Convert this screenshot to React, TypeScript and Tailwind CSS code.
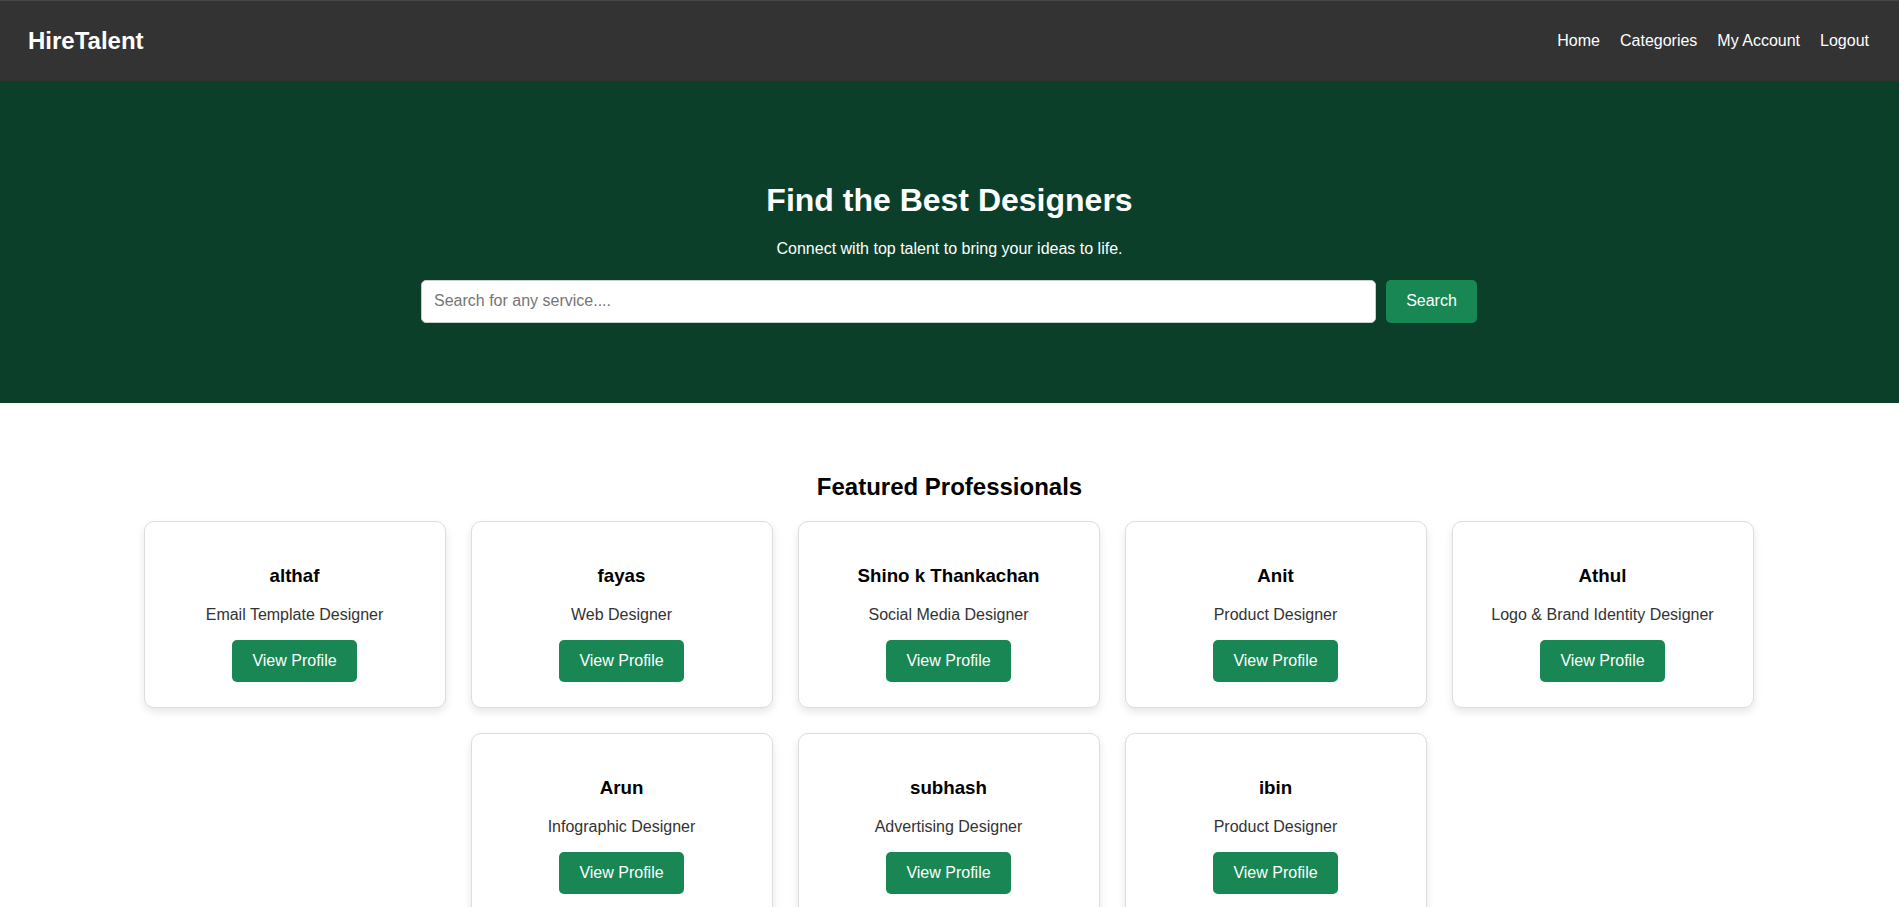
import React from "react";

const pros = [
  { name: "althaf", role: "Email Template Designer" },
  { name: "fayas", role: "Web Designer" },
  { name: "Shino k Thankachan", role: "Social Media Designer" },
  { name: "Anit", role: "Product Designer" },
  { name: "Athul", role: "Logo & Brand Identity Designer" },
  { name: "Arun", role: "Infographic Designer" },
  { name: "subhash", role: "Advertising Designer" },
  { name: "ibin", role: "Product Designer" },
];

export default function App() {
  return (
    <div
      className="min-h-screen bg-white text-black"
      style={{ fontFamily: '"Liberation Sans", Arial, sans-serif' }}
    >
      <header className="h-[81px] bg-[#333333] border-t border-[#474747] flex items-center justify-between pl-[28px] pr-[30px]">
        <div className="text-white font-bold text-[24px] leading-[28px]">HireTalent</div>
        <nav className="flex items-center gap-[20px] text-white text-[16px]">
          <a href="#">Home</a>
          <a href="#">Categories</a>
          <a href="#">My Account</a>
          <a href="#">Logout</a>
        </nav>
      </header>

      <section className="bg-[#0b3f2a] text-white text-center py-[80px]">
        <h1 className="text-[32px] leading-[36.8px] font-bold mt-[21px]">Find the Best Designers</h1>
        <p className="text-[16px] leading-[18.4px] mt-[21.44px]">
          Connect with top talent to bring your ideas to life.
        </p>
        <div className="flex justify-center gap-[10px] mt-[21px] pr-[1px]">
          <input
            type="text"
            placeholder="Search for any service...."
            className="w-[955px] h-[43px] bg-white rounded-[5px] border border-[#cccccc] px-[12px] text-[16px] text-black placeholder:text-[#757575] outline-none"
          />
          <button className="h-[43px] w-[91px] bg-[#198754] text-white text-[16px] rounded-[5px]">
            Search
          </button>
        </div>
      </section>

      <section className="pt-[50px] pb-[40px]">
        <h2 className="text-center text-[24px] leading-[27.6px] font-bold mt-[20px] mb-[21px]">
          Featured Professionals
        </h2>
        <div className="flex flex-wrap justify-center gap-x-[25px] gap-y-[25px] w-[1610px] mx-auto -translate-x-[1px]">
          {pros.map((p) => (
            <div
              key={p.name}
              className="w-[302px] bg-white border border-[#dddddd] rounded-[10px] pt-[24px] pb-[25px] px-[24px] text-center shadow-[0_4px_8px_rgba(0,0,0,0.1)]"
            >
              <h3 className="text-[18.72px] leading-[21.5px] font-bold mt-[18.72px] text-black">
                {p.name}
              </h3>
              <p className="text-[16px] leading-[18.4px] text-[#333333] mt-[19.5px] mb-[16px]">
                {p.role}
              </p>
              <button className="h-[42px] px-[20px] bg-[#198754] text-white text-[16px] rounded-[5px]">
                View Profile
              </button>
            </div>
          ))}
        </div>
      </section>
    </div>
  );
}
